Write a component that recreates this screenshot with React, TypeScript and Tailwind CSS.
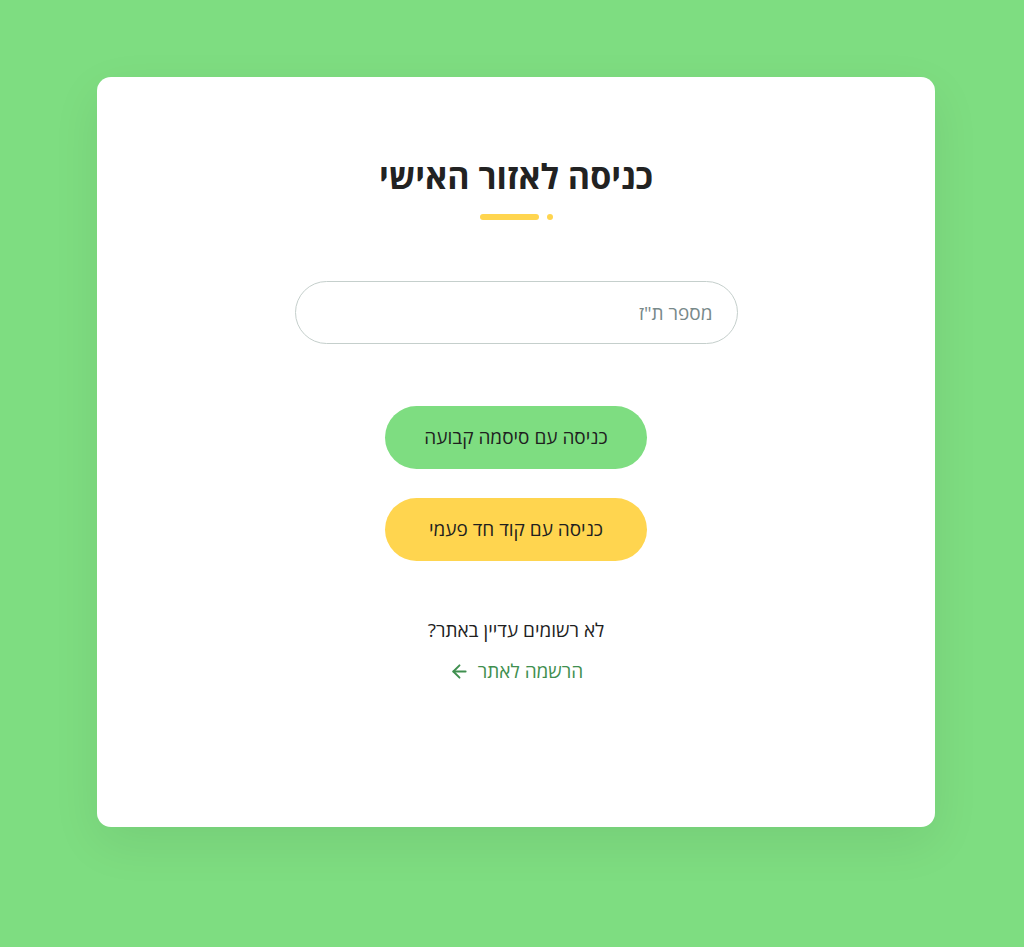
import { ArrowLeft } from "lucide-react";

export default function App() {
  return (
    <div
      dir="rtl"
      className="min-h-[947px] w-full bg-[#7edd81] pt-[77px] pb-[120px] pl-[8px]"
      style={{ fontFamily: '"Open Sans", "Liberation Sans", "DejaVu Sans", sans-serif' }}
    >
      <div className="mx-auto flex h-[750px] w-[838px] flex-col items-center rounded-[14px] bg-white pt-[77px] shadow-[0_16px_50px_rgba(0,0,0,0.07)]">
        <h1 className="text-[34px] font-bold leading-[44px] text-[#222]">כניסה לאזור האישי</h1>
        <div className="mt-[16px] flex items-center gap-[8px]">
          <span className="h-[6px] w-[6px] rounded-full bg-[#ffd54f]" />
          <span className="h-[6px] w-[59px] rounded-full bg-[#ffd54f]" />
        </div>

        <input
          type="text"
          placeholder='מספר ת"ז'
          className="mt-[61px] h-[63px] w-[443px] rounded-full border border-[#c5cfcc] bg-white px-[24px] text-[19px] font-medium text-[#333] outline-none placeholder:text-[#78898a]"
        />

        <button className="mt-[62px] h-[63px] w-[262px] rounded-full bg-[#7edd81] text-[19px] font-medium text-[#1f1f1f]">
          כניסה עם סיסמה קבועה
        </button>
        <button className="mt-[29px] h-[63px] w-[262px] rounded-full bg-[#ffd54f] text-[19px] font-medium text-[#1f1f1f]">
          כניסה עם קוד חד פעמי
        </button>

        <p className="mt-[55px] text-[19px] font-medium leading-[28px] text-[#1f1f1f]">לא רשומים עדיין באתר?</p>
        <a href="#" className="mt-[13px] flex items-center gap-[8px] text-[19px] font-medium leading-[28px] text-[#3f8f4f]">
          הרשמה לאתר
          <ArrowLeft className="h-[21px] w-[21px]" strokeWidth={2.2} />
        </a>
      </div>
    </div>
  );
}
